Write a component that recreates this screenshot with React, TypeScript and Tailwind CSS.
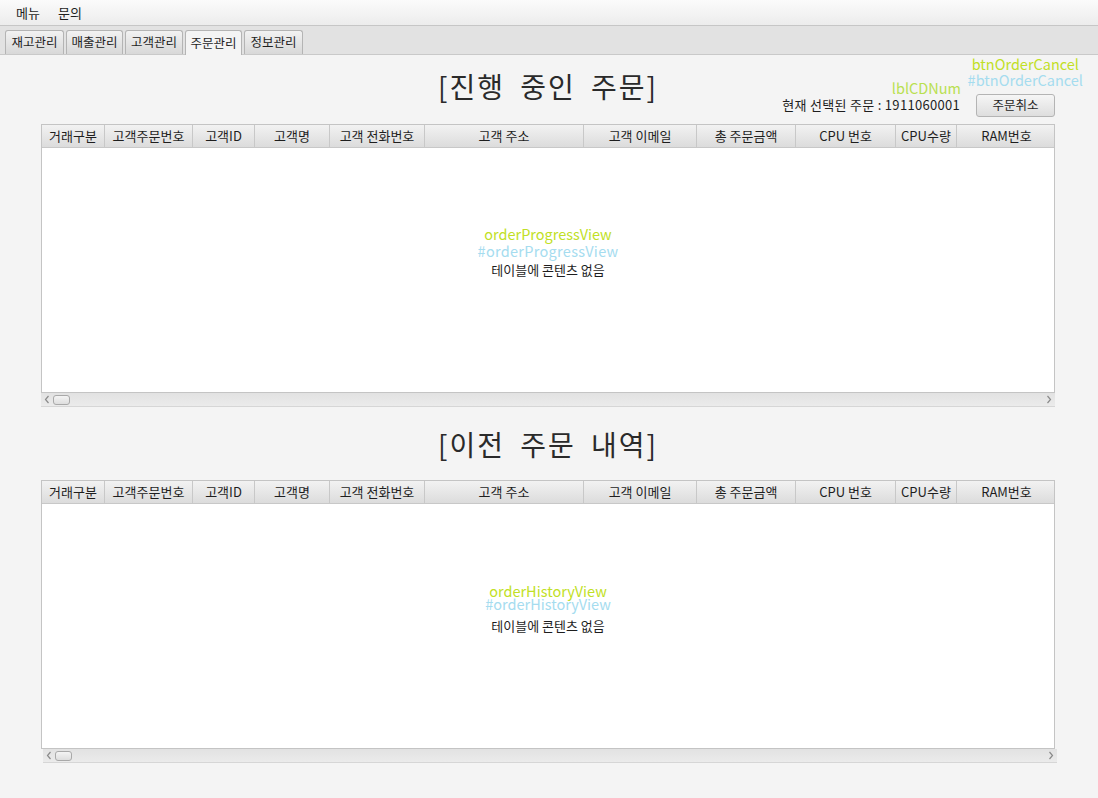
import React from 'react';

const columns = [
  { label: '거래구분', w: 'w-[63px]' },
  { label: '고객주문번호', w: 'w-[88px]' },
  { label: '고객ID', w: 'w-[62px]' },
  { label: '고객명', w: 'w-[75px]' },
  { label: '고객 전화번호', w: 'w-[95px]' },
  { label: '고객 주소', w: 'w-[159px]' },
  { label: '고객 이메일', w: 'w-[113px]' },
  { label: '총 주문금액', w: 'w-[99px]' },
  { label: 'CPU 번호', w: 'w-[100px]' },
  { label: 'CPU수량', w: 'w-[61px]' },
  { label: 'RAM번호', w: 'w-[99px]' },
];

const tabs = [
  { label: '재고관리', w: 'w-[59px]' },
  { label: '매출관리', w: 'w-[57px]' },
  { label: '고객관리', w: 'w-[58px]' },
  { label: '주문관리', w: 'w-[57px]' },
  { label: '정보관리', w: 'w-[59px]' },
];

function ScrollBar({ shift }: { shift?: boolean }) {
  return (
    <div className={`h-[14px] bg-gradient-to-b from-[#e2e2e2] to-[#ebebeb] border-b border-[#d6d6d6] flex items-center justify-between px-[3px] ${shift ? 'ml-[2px] -mr-[2px]' : ''}`}>
      <div className="flex items-center gap-[3px]">
        <svg width="6" height="9" viewBox="0 0 6 9">
          <path d="M4.5 1 L1.5 4.5 L4.5 8" fill="none" stroke="#8a8a8a" strokeWidth="1.2" />
        </svg>
        <div className="w-[17px] h-[10px] rounded-[3px] border border-[#a9a9a9] bg-gradient-to-b from-[#f4f4f4] to-[#dedede]" />
      </div>
      <svg width="6" height="9" viewBox="0 0 6 9">
        <path d="M1.5 1 L4.5 4.5 L1.5 8" fill="none" stroke="#8a8a8a" strokeWidth="1.2" />
      </svg>
    </div>
  );
}

function OrderTable({ viewId, tight }: { viewId: string; tight?: boolean }) {
  return (
    <div className="border border-[#c4c4c4] bg-white">
      <div className="flex h-[23px] bg-gradient-to-b from-[#f2f2f2] to-[#dcdcdc] border-b border-[#c8c8c8]">
        {columns.map((c, i) => (
          <div
            key={c.label}
            className={`${c.w} shrink-0 flex items-center justify-center text-[13px] text-[#1e1e1e] whitespace-nowrap ${i < columns.length - 1 ? 'border-r border-[#c8c8c8]' : ''}`}
          >
            {c.label}
          </div>
        ))}
      </div>
      <div className="h-[244px] flex items-center justify-center">
        <div className="relative text-[13px] leading-[18px] text-[#1e1e1e]">
          테이블에 콘텐츠 없음
          <div className={`absolute left-1/2 -translate-x-1/2 ${tight ? '-top-[35px]' : '-top-[36px]'} text-[14.5px] leading-[17px] text-[#c1df26] whitespace-nowrap`}>
            {viewId}
          </div>
          <div className={`absolute left-1/2 -translate-x-1/2 ${tight ? '-top-[22px]' : '-top-[19px]'} text-[14.5px] leading-[17px] text-[#a5dcef] whitespace-nowrap ${tight ? '' : 'tracking-[0.3px]'}`}>
            #{viewId}
          </div>
        </div>
      </div>
    </div>
  );
}

export default function App() {
  return (
    <div className="w-[1098px] h-[798px] bg-[#f4f4f4] flex flex-col overflow-hidden" style={{ fontFamily: '"Noto Sans CJK KR", "Noto Sans", sans-serif' }}>
      {/* menu bar */}
      <div className="h-[26px] shrink-0 bg-gradient-to-b from-[#fbfbfb] to-[#ececec] border-b border-[#c6c6c6] flex items-center gap-[18px] pl-[16px] text-[13px] text-[#1e1e1e]">
        <span>메뉴</span>
        <span>문의</span>
      </div>

      {/* tab bar */}
      <div className="h-[29px] shrink-0 bg-[#e2e2e2] border-b border-[#c9c9c9] flex items-end gap-[2px] pl-[5px]">
        {tabs.map((t) => {
          const active = t.label === '주문관리';
          return (
            <div
              key={t.label}
              className={`${t.w} flex items-center justify-center text-[12.5px] text-[#1e1e1e] border border-[#b4b4b4] border-b-0 rounded-t-[3px] ${
                active ? 'bg-[#f4f4f4] -mb-px h-[25px]' : 'h-[24px] bg-gradient-to-b from-[#f2f2f2] to-[#d8d8d8]'
              }`}
            >
              {t.label}
            </div>
          );
        })}
      </div>

      {/* content */}
      <div className="pl-[41px] pr-[43px]">
        {/* section 1 header */}
        <div className="grid h-[69px] relative">
          <div className="col-start-1 row-start-1 flex justify-center pt-[13px]">
            <span className="text-[28px] leading-[36px] text-[#2a2a2a] tracking-[2px]" style={{ wordSpacing: '7px' }}>[진행 중인 주문]</span>
          </div>
          <div className="col-start-1 row-start-1 flex justify-end items-end pb-[7px] gap-[16px]">
            <span className="text-[13px] text-[#1e1e1e] mb-[3px] tracking-[0.3px]">현재 선택된 주문 : 1911060001</span>
            <button className="w-[79px] h-[23px] rounded-[3px] border border-[#b4b4b4] bg-gradient-to-b from-[#f6f6f6] to-[#dedede] text-[12.5px] text-[#1e1e1e]">
              주문취소
            </button>
          </div>
          <span className="absolute right-[94px] top-[22px] text-[14.5px] text-[#b9e050]">lblCDNum</span>
          <span className="absolute right-[-24px] top-[0px] text-[14.5px] leading-[18px] text-[#c1df26]">btnOrderCancel</span>
          <span className="absolute right-[-28px] top-[16px] text-[14.5px] leading-[18px] text-[#a5dcef]">#btnOrderCancel</span>
        </div>

        <OrderTable viewId="orderProgressView" />
        <ScrollBar />

        {/* section 2 header */}
        <div className="h-[73px] flex justify-center pt-[19px]">
          <span className="text-[28px] leading-[36px] text-[#2a2a2a] tracking-[2px]" style={{ wordSpacing: '7px' }}>[이전 주문 내역]</span>
        </div>

        <OrderTable viewId="orderHistoryView" tight />
        <ScrollBar shift />
      </div>
    </div>
  );
}
